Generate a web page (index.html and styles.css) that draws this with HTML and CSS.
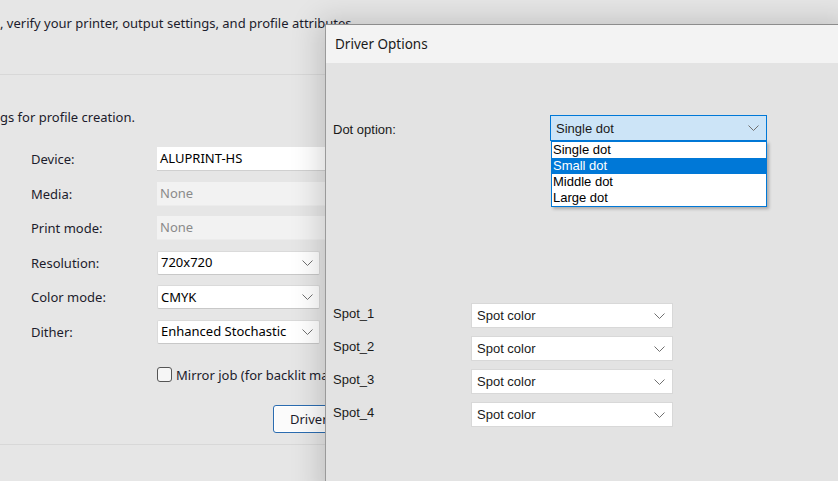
FILE: index.html
```html
<!DOCTYPE html>
<html lang="en">
<head>
    <meta charset="UTF-8">
    <title>Profile Wizard - Driver Options</title>
    <link rel="stylesheet" href="styles.css">
</head>
<body>
    <div class="desktop">
        <div class="main-window">
            <p class="intro">, verify your printer, output settings, and profile attributes.</p>
            <div class="sep"></div>
            <p class="lead">gs for profile creation.</p>

            <div class="form-grid">
                <span class="lbl">Device:</span>
                <div class="field wide">ALUPRINT-HS</div>

                <span class="lbl">Media:</span>
                <div class="field wide disabled">None</div>

                <span class="lbl">Print mode:</span>
                <div class="field wide disabled">None</div>

                <span class="lbl">Resolution:</span>
                <div class="field combo">720x720
                    <svg class="chev" width="11" height="6" viewBox="0 0 11 6"><polyline points="0.5,0.5 5.5,5.5 10.5,0.5" /></svg>
                </div>

                <span class="lbl">Color mode:</span>
                <div class="field combo">CMYK
                    <svg class="chev" width="11" height="6" viewBox="0 0 11 6"><polyline points="0.5,0.5 5.5,5.5 10.5,0.5" /></svg>
                </div>

                <span class="lbl">Dither:</span>
                <div class="field combo">Enhanced Stochastic
                    <svg class="chev" width="11" height="6" viewBox="0 0 11 6"><polyline points="0.5,0.5 5.5,5.5 10.5,0.5" /></svg>
                </div>
            </div>

            <label class="check">
                <span class="box"></span>
                <span>Mirror job (for backlit material)</span>
            </label>

            <div class="btn-row">
                <button class="btn">Driver Options...</button>
            </div>
            <div class="sep bottom"></div>
        </div>

        <div class="dialog">
            <div class="titlebar">Driver Options</div>
            <div class="dlg-body">
                <div class="dot-row">
                    <span class="dlg-lbl">Dot option:</span>
                    <div class="dlg-select open">Single dot
                        <svg class="chev" width="11" height="6" viewBox="0 0 11 6"><polyline points="0.5,0.5 5.5,5.5 10.5,0.5" /></svg>
                    </div>
                    <ul class="dlg-list">
                        <li>Single dot</li>
                        <li class="hot">Small dot</li>
                        <li>Middle dot</li>
                        <li>Large dot</li>
                    </ul>
                </div>

                <div class="spot-grid">
                    <span class="dlg-lbl">Spot_1</span>
                    <div class="dlg-select">Spot color
                        <svg class="chev" width="11" height="6" viewBox="0 0 11 6"><polyline points="0.5,0.5 5.5,5.5 10.5,0.5" /></svg>
                    </div>
                    <span class="dlg-lbl">Spot_2</span>
                    <div class="dlg-select">Spot color
                        <svg class="chev" width="11" height="6" viewBox="0 0 11 6"><polyline points="0.5,0.5 5.5,5.5 10.5,0.5" /></svg>
                    </div>
                    <span class="dlg-lbl">Spot_3</span>
                    <div class="dlg-select">Spot color
                        <svg class="chev" width="11" height="6" viewBox="0 0 11 6"><polyline points="0.5,0.5 5.5,5.5 10.5,0.5" /></svg>
                    </div>
                    <span class="dlg-lbl">Spot_4</span>
                    <div class="dlg-select">Spot color
                        <svg class="chev" width="11" height="6" viewBox="0 0 11 6"><polyline points="0.5,0.5 5.5,5.5 10.5,0.5" /></svg>
                    </div>
                </div>
            </div>
        </div>
    </div>
</body>
</html>
```

FILE: styles.css
```css
body { margin: 0; background-color: #e6e6e6; overflow: hidden; }
.desktop { position: relative; width: 838px; height: 481px; overflow: hidden; }

/* main wizard window behind the dialog */
.main-window {
    font-family: "Noto Sans", sans-serif;
    font-size: 13px;
    color: #1c1c2c;
    background-color: #e6e6e6;
    height: 481px;
}
.intro { margin: 0; padding-top: 13px; height: 20px; line-height: 20px; white-space: nowrap; }
.sep { height: 1px; background-color: #d8d8d8; margin-top: 41px; }
.sep.bottom { margin-top: 11px; }
.lead { margin: 32px 0 0; line-height: 20px; }

.form-grid {
    display: grid;
    grid-template-columns: 126px 200px;
    row-gap: 10.6px;
    padding-left: 31px;
    margin-top: 20px;
}
.lbl { line-height: 24px; }
.field {
    height: 24px; line-height: 23px;
    box-sizing: border-box;
    padding-left: 3px;
    background-color: #fff;
    border-bottom: 1px solid #d0d0d0;
    color: #000;
    white-space: nowrap;
}
.field.disabled { background-color: #f2f2f2; border-bottom-color: #ececec; color: #8a8a8a; }
.field.combo {
    width: 163px;
    display: flex; align-items: center; justify-content: space-between;
    padding-right: 6px;
    border: 1px solid #dadada; border-bottom-color: #c8c8c8;
    border-radius: 2px;
}

.chev { fill: none; stroke: #707070; stroke-width: 1; flex: none; }

/* the dialog covers everything right of x=325 */
.check {
    display: flex; align-items: center; gap: 4px;
    width: 168px; overflow: hidden;
    margin: 22px 0 0 157px;
    white-space: nowrap;
}
.check .box {
    flex: none;
    width: 13px; height: 13px;
    border: 1px solid #555;
    border-radius: 3px;
    background-color: #f6f6f6;
}
.btn-row { width: 325px; overflow: hidden; padding-left: 273px; margin-top: 21px; box-sizing: border-box; }
.btn {
    font-family: "Noto Sans", sans-serif;
    font-size: 13px;
    color: #1c1c2c;
    height: 28px; width: 120px;
    padding: 0 0 0 16px; text-align: left;
    white-space: nowrap;
    background-color: #fbfbfb;
    border: 1px solid #2b6cb0;
    border-radius: 3px;
    box-shadow: inset 0 0 0 1px #fff;
}

/* Driver Options dialog */
.dialog {
    position: absolute; left: 325px; top: 24px;
    width: 530px; height: 480px;
    background-color: #e3e3e3;
    border-top: 1px solid #8c8c8c;
    border-left: 1px solid #9a9a9a;
    box-shadow: -6px -4px 28px rgba(0,0,0,0.16);
    font-family: "Liberation Sans", Arial, sans-serif;
    font-size: 13px;
    color: #1a1a1a;
}
.titlebar {
    height: 38px; line-height: 38px;
    padding-left: 9px;
    background-color: #f3f3f3;
    font-family: "Noto Sans", sans-serif;
    font-size: 13.5px;
    color: #1a1a1a;
}
.dlg-body { padding: 52px 0 0 7px; }

.dot-row { position: relative; display: flex; align-items: center; }
.dot-row .dlg-lbl { width: 217px; padding-top: 2px; }
.dlg-select {
    box-sizing: border-box;
    height: 25px;
    display: flex; align-items: center; justify-content: space-between;
    padding: 0 7px 0 5px;
    background-color: #fff;
    border: 1px solid #d8d8d8;
}
.dlg-select.open {
    width: 217px; height: 26px;
    background-color: #cce4f7;
    border-color: #0078d7;
}
.dlg-list {
    position: absolute; left: 218px; top: 26px;
    width: 216px;
    margin: 0; padding: 0;
    list-style: none;
    background-color: #fff;
    border: 1px solid #0078d7;
    box-sizing: border-box;
    box-shadow: 2px 2px 3px rgba(0,0,0,0.25);
    z-index: 2;
}
.dlg-list li { height: 16px; line-height: 16px; padding-left: 1px; color: #000; }
.dlg-list li.hot { background-color: #0078d7; color: #fff; }

.spot-grid {
    display: grid;
    grid-template-columns: 138px 202px;
    row-gap: 8px;
    margin-top: 162px;
}
.spot-grid .dlg-lbl { padding-top: 3px; }
```
